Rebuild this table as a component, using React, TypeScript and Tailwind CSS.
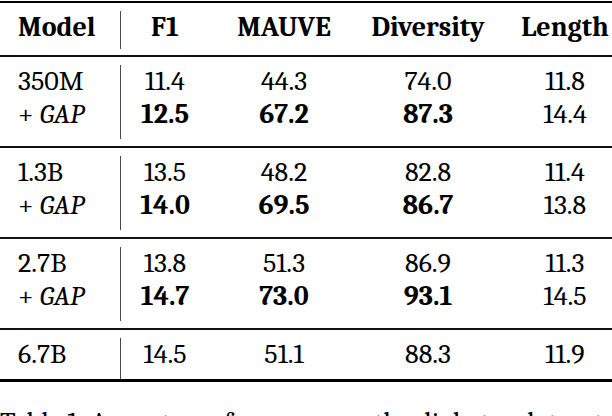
type Row = {
  model: string;
  gap?: boolean;
  f1: string;
  mauve: string;
  diversity: string;
  length: string;
};

const sections: Row[][] = [
  [
    { model: "350M", f1: "11.4", mauve: "44.3", diversity: "74.0", length: "11.8" },
    { model: "GAP", gap: true, f1: "12.5", mauve: "67.2", diversity: "87.3", length: "14.4" },
  ],
  [
    { model: "1.3B", f1: "13.5", mauve: "48.2", diversity: "82.8", length: "11.4" },
    { model: "GAP", gap: true, f1: "14.0", mauve: "69.5", diversity: "86.7", length: "13.8" },
  ],
  [
    { model: "2.7B", f1: "13.8", mauve: "51.3", diversity: "86.9", length: "11.3" },
    { model: "GAP", gap: true, f1: "14.7", mauve: "73.0", diversity: "93.1", length: "14.5" },
  ],
  [{ model: "6.7B", f1: "14.5", mauve: "51.1", diversity: "88.3", length: "11.9" }],
];

function TableRow({ row, last }: { row: Row; last: boolean }) {
  const weight = row.gap ? "font-bold" : "font-normal";
  return (
    <div className={`flex ${last ? "h-[41px]" : "h-[33px]"}`}>
      <div className="w-[121px] shrink-0 border-r border-[#4a4a4a] pl-[18px]">
        {row.gap ? (
          <>
            + <i>{row.model}</i>
          </>
        ) : (
          row.model
        )}
      </div>
      <div className={`w-[88px] shrink-0 text-center ${weight}`}>{row.f1}</div>
      <div className={`w-[150px] shrink-0 text-center ${weight}`}>{row.mauve}</div>
      <div className={`w-[138px] shrink-0 text-center ${weight}`}>{row.diversity}</div>
      <div className="w-[136px] shrink-0 text-center">{row.length}</div>
    </div>
  );
}

export default function App() {
  return (
    <div className="h-[416px] w-[612px] overflow-hidden bg-white pt-[1px] font-serif text-[28px] leading-[33px] text-black">
      <div className="h-[2px] bg-black" />

      <div className="pt-[8px] pb-[6px]">
        <div className="flex h-[38px] font-bold">
          <div className="w-[121px] shrink-0 border-r border-[#4a4a4a] pl-[18px]">Model</div>
          <div className="w-[88px] shrink-0 text-center">F1</div>
          <div className="w-[150px] shrink-0 text-center">MAUVE</div>
          <div className="w-[138px] shrink-0 text-center">Diversity</div>
          <div className="w-[136px] shrink-0 text-center">Length</div>
        </div>
      </div>

      {sections.map((rows, i) => (
        <div key={i}>
          <div className="h-[2px] bg-[#111]" />
          <div className={i === sections.length - 1 ? "pt-[8px]" : "pt-[8px] pb-[7px]"}>
            {rows.map((row, j) => (
              <TableRow key={j} row={row} last={j === rows.length - 1} />
            ))}
          </div>
        </div>
      ))}

      <div className="h-[3px] bg-black" />

      <p className="mt-[24px] whitespace-nowrap">
        Table 1: Average performance on the dialogue datasets. We report
      </p>
    </div>
  );
}
